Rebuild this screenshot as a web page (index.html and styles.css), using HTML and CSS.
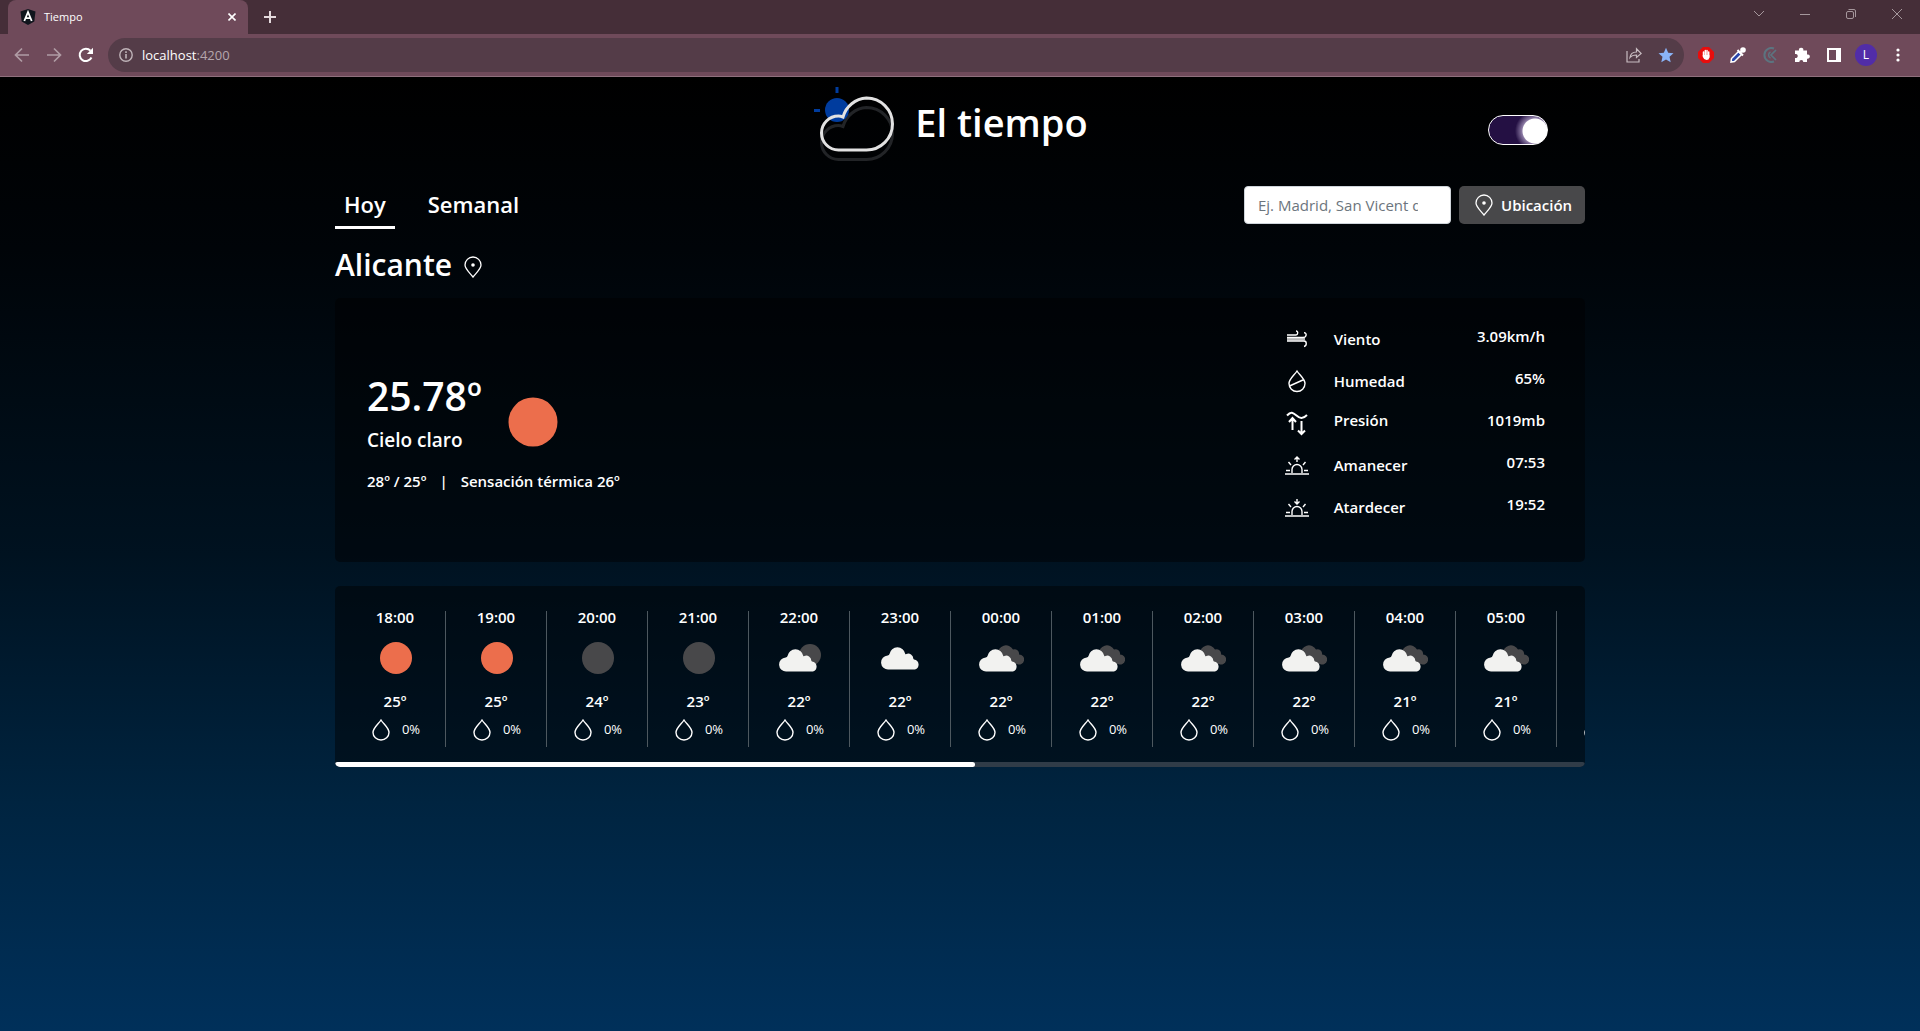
FILE: index.html
```html
<!DOCTYPE html>
<html lang="es">
<head>
<meta charset="utf-8">
<title>Tiempo</title>
<link rel="stylesheet" href="styles.css">
</head>
<body>
<svg class="defs" aria-hidden="true">
  <symbol id="pin" viewBox="0 0 18 22"><path d="M9 21C6 17 1 13 1 9a8 8 0 0 1 16 0c0 4-5 8-8 12z" fill="none" stroke="#fff" stroke-width="1.3"/><circle cx="9" cy="9" r="1.8" fill="#fff"/></symbol>
  <symbol id="drop" viewBox="0 0 18 22"><path d="M9 1C6.500 5 1 9 1 13.500a8 7.500 0 0 0 16 0C17 9 11.500 5 9 1z" fill="none" stroke="#fff" stroke-width="1.400"/></symbol>
  <symbol id="sun" viewBox="0 0 46 32"><circle cx="24" cy="16" r="16" fill="#ec6e4c"/></symbol>
  <symbol id="moon" viewBox="0 0 46 32"><circle cx="24" cy="16" r="16" fill="#48484a"/></symbol>
  <symbol id="cloud-shape" viewBox="0 0 40 26"><path d="M7.500 24.500a7 7 0 0 1-.8-14A2 2 0 0 0 8.500 9a8 8 0 0 1 15.800 0q.4.700 1 0a5 5 0 0 1 7 4.500q0 .8.700.9a5.200 5.200 0 0 1 1 10.100z"/></symbol>
  <symbol id="cloud" viewBox="0 0 46 32"><use href="#cloud-shape" x="4" y="3" width="40" height="26" fill="#f2f2f0"/></symbol>
  <symbol id="few" viewBox="0 0 46 32"><circle cx="34" cy="13" r="11" fill="#48484a"/><use href="#cloud-shape" x="3" y="5" width="40" height="26" fill="#f2f2f0"/></symbol>
  <symbol id="broken" viewBox="0 0 46 32"><path d="M20 12a8 8 0 0 1 15-4.500 4.500 4.500 0 0 1 6 5A5 5 0 1 1 39 22L24 20z" fill="#48484a"/><use href="#cloud-shape" x="1" y="5" width="40" height="26" fill="#f2f2f0"/></symbol>
</svg>

<header class="browser">
  <div class="tabs">
    <div class="tab">
      <svg width="16" height="16" viewBox="0 0 16 16"><path d="M8 0l7.500 2.500-1.200 10L8 16l-6.300-3.500L.5 2.500z" fill="#10151d"/><path d="M4.300 12L8 3l3.700 9M5.600 9.200h4.800" fill="none" stroke="#fff" stroke-width="1.800"/></svg>
      <span class="tab-title">Tiempo</span>
      <button class="plain" aria-label="Cerrar pestaña"><svg width="8" height="8" viewBox="0 0 8 8"><path d="M.5.5l7 7m0-7l-7 7" stroke="#fff" stroke-width="1.600"/></svg></button>
    </div>
    <button class="plain new-tab" aria-label="Nueva pestaña"><svg width="12" height="12" viewBox="0 0 12 12"><path d="M6 0v12M0 6h12" stroke="#e4dadd" stroke-width="2"/></svg></button>
    <div class="window-controls">
      <button class="plain" aria-label="Buscar pestañas"><svg width="12" height="12" viewBox="0 0 12 12"><path d="M1 3l5 5 5-5"/></svg></button>
      <button class="plain" aria-label="Minimizar"><svg width="12" height="12" viewBox="0 0 12 12"><path d="M1 6.500h10"/></svg></button>
      <button class="plain" aria-label="Restaurar"><svg width="12" height="12" viewBox="0 0 12 12"><rect x="1.500" y="3.500" width="7" height="7" rx="1.500"/><path d="M3.500 1.500H9q1.500 0 1.500 1.500v6"/></svg></button>
      <button class="plain" aria-label="Cerrar"><svg width="12" height="12" viewBox="0 0 12 12"><path d="M1 1l10 10M11 1L1 11"/></svg></button>
    </div>
  </div>
  <div class="toolbar">
    <button class="plain faded" aria-label="Atrás"><svg width="16" height="16" viewBox="0 0 16 16"><path d="M15 8H2m6-6.500L1.500 8 8 14.500" fill="none" stroke="#fff" stroke-width="1.700"/></svg></button>
    <button class="plain faded" aria-label="Adelante"><svg width="16" height="16" viewBox="0 0 16 16"><path d="M1 8h13M8 1.500L14.500 8 8 14.500" fill="none" stroke="#fff" stroke-width="1.700"/></svg></button>
    <button class="plain" aria-label="Recargar"><svg width="16" height="16" viewBox="0 0 16 16"><path d="M13.500 10.500A6.200 6.200 0 1 1 12.500 3.700" fill="none" stroke="#fff" stroke-width="2"/><path d="M15 .8v6.200H8.800z" fill="#fff"/></svg></button>
    <div class="address">
      <svg width="14" height="14" viewBox="0 0 14 14"><circle cx="7" cy="7" r="6.200" fill="none" stroke="#bfb3b8" stroke-width="1.400"/><path d="M7 6v4.500M7 3.300v1.600" stroke="#bfb3b8" stroke-width="1.600"/></svg>
      <span class="url">localhost<span class="port">:4200</span></span>
      <svg width="16" height="16" viewBox="0 0 16 16"><path d="M1 4v11h12v-3M4 10.500c.5-4 3-5.500 6.500-5.500V1.800L15.200 6.500l-4.700 4V8c-3 0-5 .6-6.500 2.500z" fill="none" stroke="#c8bcc1" stroke-width="1.200"/></svg>
      <svg width="16" height="16" viewBox="0 0 16 16"><path d="M8 .7l2.200 5 5.300.5-4 3.600 1.200 5.400L8 12.400l-4.700 2.800 1.200-5.400-4-3.600 5.300-.5z" fill="#8ab4f8"/></svg>
    </div>
    <div class="extensions">
      <svg width="16" height="16" viewBox="0 0 16 16"><path d="M5 0h6l5 5v6l-5 5H5l-5-5V5z" fill="#e80d0d"/><path d="M5.500 5v4M7.300 3.500v5M9 3.500v5M10.700 5v5" stroke="#fff" stroke-width="1.500" stroke-linecap="round"/><path d="M4.800 8h6.600v2.500Q11 13 8.500 13T4.800 10z" fill="#fff"/></svg>
      <svg width="16" height="16" viewBox="0 0 16 16"><path d="M8.500 4.500l3 3-7 7-3.500.5.500-3.500z" fill="#2946ac" stroke="#fff" stroke-width="1.500"/><path d="M7.500 3l5.500 5.500M10 6l4-4" stroke="#fff" stroke-width="2"/><circle cx="13" cy="3" r="2.800" fill="#fff"/></svg>
      <svg width="16" height="16" viewBox="0 0 16 16"><path d="M12 1.500a7 7 0 1 0 0 13" fill="none" stroke="#5c7480" stroke-width="2"/><path d="M8.500 5a3.300 3.300 0 0 0 0 6" fill="none" stroke="#5c7480" stroke-width="1.500"/><path d="M14 3L9 8l5 5" fill="none" stroke="#5c7480" stroke-width="1.700"/></svg>
      <svg width="16" height="16" viewBox="0 0 16 16"><path d="M1 3.500h4a2.200 2.200 0 1 1 4.300 0h3.700v4a2.200 2.200 0 1 1 0 4.200V15H9.300a2 2 0 1 0-4 0H1v-4a2.100 2.100 0 1 0 0-4z" fill="#fff"/></svg>
      <svg width="16" height="16" viewBox="0 0 16 16"><path d="M2 2h12v12H2z" fill="none" stroke="#fff" stroke-width="2"/><path d="M10 2h5v12h-5z" fill="#fff"/></svg>
      <span class="avatar">L</span>
      <svg class="dots" width="4" height="16" viewBox="0 0 4 16" fill="#fff"><circle cx="2" cy="3" r="1.600"/><circle cx="2" cy="8" r="1.600"/><circle cx="2" cy="13" r="1.600"/></svg>
    </div>
  </div>
</header>

<main class="page">
  <div class="container">
    <div class="hero">
      <div class="brand">
        <svg width="84" height="80" viewBox="0 0 84 80">
          <path d="M52.500 72.500h-28a17 17 0 0 1 0-34q2 0 4.500 1A26 26 0 0 1 52.500 20.500a26 26 0 0 1 0 52z" fill="none" stroke="#222427" stroke-width="3"/>
          <circle cx="23" cy="23" r="12" fill="#003c9e"/><path d="M23 0v6M0 23.500h6" stroke="#003c9e" stroke-width="3"/>
          <path d="M52.500 63h-28a17 17 0 0 1 0-34q2 0 4.500 1A26 26 0 0 1 52.500 11a26 26 0 0 1 0 52z" fill="none" stroke="#e2e2e2" stroke-width="3"/>
        </svg>
        <h1>El tiempo</h1>
      </div>
      <input class="switch" type="checkbox" role="switch" aria-label="Modo oscuro" checked>
    </div>
    <div class="controls">
      <nav class="nav"><a href="#hoy" class="active">Hoy</a><a href="#semanal">Semanal</a></nav>
      <form class="search">
        <input type="text" aria-label="Ciudad" placeholder="Ej. Madrid, San Vicent del Raspeig">
        <button type="button"><svg width="18" height="22"><use href="#pin"/></svg>Ubicación</button>
      </form>
    </div>
    <h2>Alicante <svg width="18" height="22"><use href="#pin"/></svg></h2>

    <section class="card current">
      <div class="now">
        <div class="summary">
          <div><p class="temp">25.78º</p><p class="sky">Cielo claro</p></div>
          <svg width="50" height="50" viewBox="0 0 50 50"><circle cx="25" cy="25" r="24.500" fill="#ec6e4c"/></svg>
        </div>
        <p class="range"><span>28º / 25º</span><span>|</span><span>Sensación térmica 26º</span></p>
      </div>
      <table class="details">
        <tr><td><svg width="24" height="24" viewBox="0 0 24 24"><path d="M2 8h9c2 0 2.500-4 0-4M2 10.500h16c4 0 4-5 1-4.800M2 14h17c3 0 3 5 0 5.500"/><path d="M2 12.200h18" stroke-width="2.500" opacity=".7"/></svg></td><th scope="row">Viento</th><td>3.09km/h</td></tr>
        <tr><td><svg width="24" height="24" viewBox="0 0 24 24"><path d="M12 2C9.500 6 4 10 4 14.500a8 8 0 0 0 16 0C20 10 14.500 6 12 2zM4.500 17L19 10.500"/></svg></td><th scope="row">Humedad</th><td>65%</td></tr>
        <tr class="tall"><td><svg width="24" height="26" viewBox="0 0 24 26"><path d="M2 5.500c4-4.500 6-3 9.500 0s6 4 10.500-.5M7.500 20V9M4 12l3.500-4 3.500 4M16.500 11v12M13 20.500l3.500 3.500 3.500-3.500" stroke-width="2"/></svg></td><th scope="row">Presión</th><td>1019mb</td></tr>
        <tr><td><svg width="24" height="24" viewBox="0 0 24 24"><path d="M0 21h24M1 17.500h4M19 17.500h4M7 20v-3.500a5 5 0 0 1 10 0V20M3.500 9L6 12M20.500 9L18 12M12 9V4M9.500 6.500L12 4l2.500 2.500"/></svg></td><th scope="row">Amanecer</th><td>07:53</td></tr>
        <tr><td><svg width="24" height="24" viewBox="0 0 24 24"><path d="M0 21h24M1 17.500h4M19 17.500h4M7 20v-3.500a5 5 0 0 1 10 0V20M3.500 9L6 12M20.500 9L18 12M12 4v5M9.500 6.500L12 9l2.500-2.500"/></svg></td><th scope="row">Atardecer</th><td>19:52</td></tr>
      </table>
    </section>

    <section class="card forecast">
      <ul class="hours" id="hours"></ul>
      <div class="scrollbar"><div class="thumb"></div></div>
    </section>
  </div>
</main>
<script src="app.js"></script>
</body>
</html>
```
FILE: app.js
```js
const hours = [
  ['18:00', 'sun', 25], ['19:00', 'sun', 25], ['20:00', 'moon', 24], ['21:00', 'moon', 23],
  ['22:00', 'few', 22], ['23:00', 'cloud', 22], ['00:00', 'broken', 22], ['01:00', 'broken', 22],
  ['02:00', 'broken', 22], ['03:00', 'broken', 22], ['04:00', 'broken', 21], ['05:00', 'broken', 21],
  ['06:00', 'broken', 21]
];
document.getElementById('hours').innerHTML = hours.map(([time, icon, temp]) => `
  <li>
    <strong>${time}</strong>
    <svg width="46" height="32"><use href="#${icon}"/></svg>
    <strong>${temp}º</strong>
    <span class="rain"><svg width="18" height="22"><use href="#drop"/></svg>0%</span>
  </li>`).join('');
```
FILE: styles.css
```css
* { box-sizing: border-box; }
body {
  margin: 0;
  min-height: 100vh;
  display: flex;
  flex-direction: column;
  color: #fff;
  font: 16px/24px "Open Sans", "Noto Sans", sans-serif;
}
h1, h2, p, ul { margin: 0; padding: 0; }
svg { display: block; flex: none; }
.defs { position: absolute; width: 0; height: 0; }
.plain { padding: 0; border: 0; background: none; }

/* Browser frame */
.browser { background: #6f4a5a; border-bottom: 1px solid #8f707d; font-size: 12px; line-height: 16px; }
.tabs { display: flex; align-items: center; height: 34px; padding-left: 8px; background: #452e38; }
.tab { display: flex; align-items: center; gap: 8px; width: 240px; height: 34px; padding: 0 12px; background: #6f4a5a; border-radius: 8px 8px 0 0; }
.tab-title { flex: 1; font-size: 11px; }
.new-tab { margin-left: 16px; }
.window-controls { display: flex; gap: 34px; margin-left: auto; padding: 0 17px 6px 0; }
.window-controls svg { fill: none; stroke: #a5979c; stroke-width: 1; }
.toolbar { display: flex; align-items: center; gap: 16px; height: 42px; padding: 0 20px 0 14px; }
.faded { opacity: .45; }
.address { display: flex; flex: 1; align-items: center; gap: 16px; height: 34px; margin-left: -2px; padding: 0 10px 0 11px; border-radius: 17px; background: #543c48; font-size: 13px; }
.url { flex: 1; margin-left: -7px; }
.port { color: #b5a6ad; }
.extensions { display: flex; align-items: center; gap: 16px; margin-left: -2px; }
.avatar { width: 22px; height: 22px; margin: 0 -3px; border-radius: 50%; background: #512da8; line-height: 22px; text-align: center; }
.dots { margin-left: 6px; }

/* Page */
.page { flex: 1; background: linear-gradient(#000 0%, #000408 18%, #001220 50%, #002440 76%, #00305a 100%); }
.container { width: 1250px; max-width: 100%; margin: 0 auto; }
.hero { display: grid; grid-template-columns: 1fr auto 1fr; align-items: center; padding-top: 10px; }
.brand { grid-column: 2; display: flex; gap: 17px; padding-right: 18px; }
h1 { font-size: 38px; line-height: 70px; font-weight: 600; }
.switch { appearance: none; justify-self: end; width: 60px; height: 30px; margin: 5px 37px 0 0; border: 1px solid #fff; border-radius: 15px; background: radial-gradient(circle at 46px 15px, #fff 12px, #8d7ca5 13px, #241043 20px); }
.controls { display: flex; justify-content: space-between; align-items: flex-start; margin-top: 19px; }
.nav { display: flex; gap: 24px; }
.nav a { padding: 2px 9px 6px; border-bottom: 3px solid transparent; color: #fff; font-size: 22px; line-height: 32px; font-weight: 600; text-decoration: none; }
.nav .active { border-color: #fff; }
.search { display: flex; gap: 8px; }
.search input { width: 207px; height: 38px; padding: 0 32px 0 13px; border: 1px solid #ced4da; border-radius: 4px; font: 15px "Open Sans", sans-serif; }
.search input::placeholder { color: #6c757d; }
.search button { display: flex; align-items: center; gap: 8px; width: 126px; height: 38px; padding: 0 12px 0 16px; border: 0; border-radius: 5px; background: #48484a; color: #fff; font: 600 15px "Open Sans", sans-serif; }
h2 { display: flex; align-items: center; gap: 12px; height: 48px; margin-top: 12px; font-size: 30px; font-weight: 600; }
h2 svg { margin-top: 4px; }
.card { border-radius: 5px; background: rgba(0, 0, 0, .45); }
.current { display: flex; justify-content: space-between; align-items: flex-start; height: 264px; margin-top: 9px; padding: 20px 40px 20px 32px; }
.now { padding-top: 52px; }
.summary { display: flex; gap: 26px; }
.summary svg { margin-top: 27px; }
.temp { font-size: 39px; line-height: 52px; font-weight: 600; }
.sky { margin-top: 4px; font-size: 19px; line-height: 28px; font-weight: 600; }
.range { display: flex; gap: 13px; margin-top: 15px; font-size: 15px; font-weight: 600; }
.details { width: 260px; border-collapse: collapse; font-size: 15px; font-weight: 600; }
.details td, .details th { padding: 0; height: 42px; vertical-align: middle; font-weight: 600; }
.details th { padding-left: 14px; text-align: left; }
.details .tall th, .details td:last-child { padding-bottom: 7px; }
.details td:last-child { text-align: right; }
.details svg { fill: none; stroke: #fff; stroke-width: 1.4; }
.forecast { margin-top: 24px; overflow: hidden; }
.hours { display: flex; overflow-x: auto; padding: 25px 10px 15px; list-style: none; scrollbar-width: none; }
.hours li { display: flex; flex: none; flex-direction: column; align-items: center; width: 101px; height: 136px; border-right: 1px solid #4d585f; font-size: 15px; }
.hours strong { line-height: 12px; font-weight: 600; }
.hours li > svg { margin: 19px 0 21px; }
.rain { display: flex; gap: 12px; margin-top: 12px; padding-left: 2px; font-size: 13px; line-height: 20px; }
.scrollbar { height: 5px; border-radius: 3px; background: #303c48; }
.thumb { width: 51.2%; height: 5px; border-radius: 3px; background: #fff; }
```
